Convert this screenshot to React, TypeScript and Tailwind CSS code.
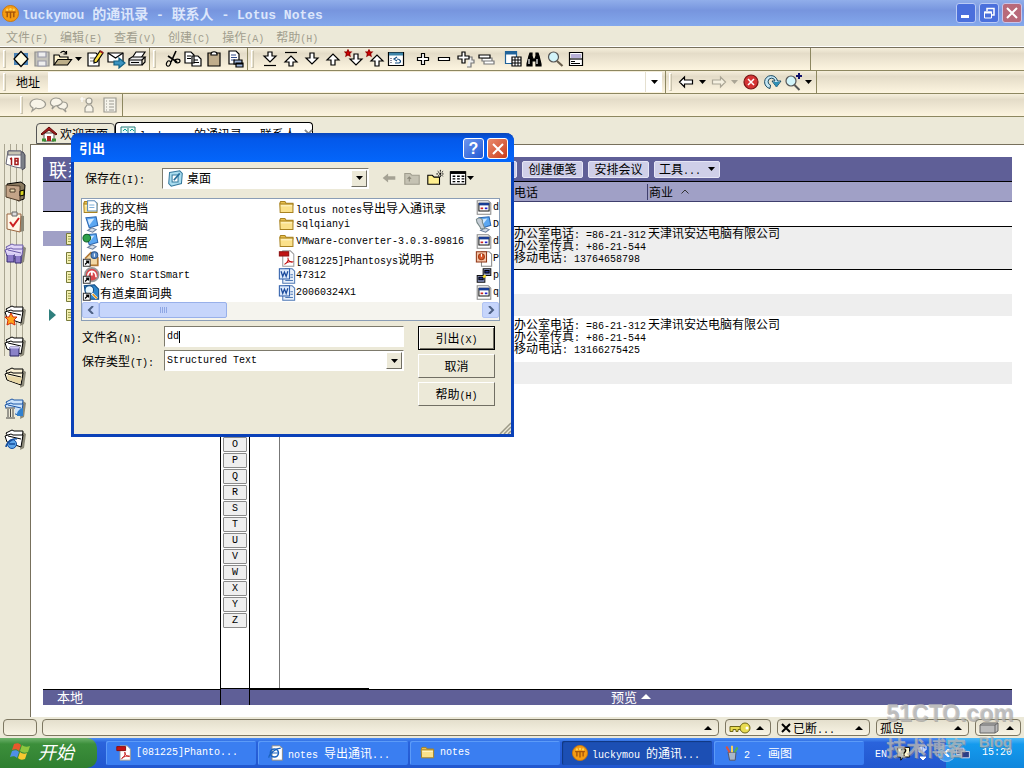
import { Fragment, type ReactNode } from "react";

// CJK glyphs are set at 12px, latin runs at 10px so two latin letters take one CJK cell
function Mix({ children, latin = "text-[10px]" }: { children: string; latin?: string }) {
    const parts = children.split(/([\x20-\x7e]+)/);
    if (parts.join("") === parts[1]) {
        return <span className={`font-[Liberation_Mono] whitespace-pre ${latin}`}>{children}</span>;
    }
    return (
        <span className="whitespace-pre">
            {parts.map((part, i) =>
                i % 2 ? <span key={i} className={`font-[Liberation_Mono] leading-0 ${latin}`}>{part}</span> : <Fragment key={i}>{part}</Fragment>
            )}
        </span>
    );
}

function Ico({ children, className = "size-5" }: { children: ReactNode; className?: string }) {
    return (
        <svg viewBox="0 0 20 20" className={`shrink-0 ${className}`} fill="none" stroke="#000" strokeWidth="1.2" aria-hidden="true">
            {children}
        </svg>
    );
}

const Caret = ({ className = "fill-black" }: { className?: string }) => (
    <svg viewBox="0 0 7 4" className={`h-1 w-[7px] shrink-0 ${className}`} aria-hidden="true"><path d="M0 0h7L3.5 4z" /></svg>
);

const CaretUp = ({ className = "h-1 w-2 fill-black" }: { className?: string }) => (
    <svg viewBox="0 0 8 4" className={`shrink-0 ${className}`} aria-hidden="true"><path d="M0 4h8L4 0z" /></svg>
);

const downArrow = "M8 4h4v5h4l-6 6-6-6h4z";
const upArrow = "M8 16h4v-5h4l-6-6-6 6h4z";
const star = "M4 1l1 2 2 0-1.500 1.500.5 2.500-2-1.300L2 7l.5-2.500L1 3h2z";

const icons = {
    diamond: <Ico><path d="M3 4h14v12H3z" fill="#4b83b5" stroke="none" /><path d="M10 2.500l7 7.500-7 7.500L3 10z" fill="#fffbe0" /></Ico>,
    save: <Ico><path d="M3 3h14v14H3z" fill="#c5c3bb" stroke="#8f8f8c" /><path d="M6 3h8v5H6zM6 12h8v5H6z" fill="#eee" stroke="#99a" /></Ico>,
    open: <Ico className="h-5 w-[21px]"><path d="M1.500 16V6h5l1 2h8v3" fill="#fff4cf" /><path d="M1.500 16l4-5.500H19L15 16z" fill="#bcae89" /><path d="M8 4c2-2.500 5-2 6 1m0-3v3h-3" /></Ico>,
    edit: <Ico><path d="M3 4h8l3 3v10H3z" fill="#fff" /><path d="M5 9h5M5 12h4" stroke="#777" /><path d="M9 11l6-9 3 2-6 9-3 1z" fill="#ffe23f" /><path d="M15 2l3 2" stroke="#a52020" strokeWidth="2" /></Ico>,
    mail: <Ico><path d="M2 4h15v9H2z" fill="#fff" /><path d="M2 4l7.500 5L17 4" /><path d="M8 12h5V9l6 5-6 5v-3H8z" fill="#3b93c0" stroke="#126083" /></Ico>,
    print: <Ico><path d="M5 9l4-6h9l-4 6z" fill="#fff" /><path d="M2 10l3-2h13l-3 3v5H2z" fill="#eee" /><path d="M2 11h13M15 16l3-3V8M4 13.500h8" /></Ico>,
    cut: <Ico><path d="M14 2l-5 11M6 7l9 6" strokeWidth="1.600" /><ellipse cx="6.500" cy="14.500" rx="2" ry="2.800" transform="rotate(25 6.500 14.500)" /><ellipse cx="15.500" cy="12" rx="2.500" ry="1.800" /></Ico>,
    copy: <Ico><path d="M2 3h6l3 3v8H2zM9 7h6l3 3v7H9z" fill="#fff" /><path d="M4 7h4M4 9.500h4M11 11h4M11 13.500h5" /></Ico>,
    clipboard: <Ico><path d="M4 4h12v13H4z" fill="#c0ad8c" /><path d="M7 5c0-3 6-3 6 0v1H7z" fill="#fff" /></Ico>,
    paste: <Ico><path d="M4 2h7l3 3v10H4z" fill="#fff" /><path d="M6 6h5M6 8.500h6M6 11h4" stroke="#334b88" /><path d="M9 11h8v4H9zM11 14h7v4h-7z" fill="#9cb3d8" /></Ico>,
    toBottom: <Ico><path d="M8 3h4v4h4l-6 6-6-6h4z" fill="#fff" /><path d="M4 16.500h12" /></Ico>,
    toTop: <Ico><path d="M8 17h4v-4h4l-6-6-6 6h4z" fill="#fff" /><path d="M4 3.500h12" /></Ico>,
    down: <Ico><path d={downArrow} fill="#fff" /></Ico>,
    up: <Ico><path d={upArrow} fill="#fff" /></Ico>,
    starDown: <Ico><path d={downArrow} fill="#fff" transform="translate(2 1)" /><path d={star} fill="#d00" stroke="#900" /></Ico>,
    starUp: <Ico><path d={upArrow} fill="#fff" transform="translate(2 1)" /><path d={star} fill="#d00" stroke="#900" /></Ico>,
    refreshWin: <Ico><path d="M2.500 3.500h15v13h-15z" fill="#fff" /><path d="M3 5h14" stroke="#3d84a8" strokeWidth="3" /><path d="M5 9v6" stroke="#446" strokeDasharray="1 1" /><path d="M9 14h4c3-1 1-4-2-4m0-2-3 2 3 2" stroke="#144d82" /></Ico>,
    plus: <Ico><path d="M8.500 4.500h3v4h4v3h-4v4h-3v-4h-4v-3h4z" fill="#fff" /></Ico>,
    minus: <Ico><path d="M4.500 8.500h11v3h-11z" fill="#fff" /></Ico>,
    plusAll: <Ico><path d="M14 8h3v3h2v3h-3v4h-4" stroke="#777" fill="#eee" /><path d="M7 3h3v4h4v3h-4v4H7v-4H3V7h4z" fill="#fff" /></Ico>,
    minusAll: <Ico><path d="M8 12h10v3H8zM6 9h10v3H6z" fill="#fff" stroke="#777" /><path d="M3 6h11v3H3z" fill="#fff" /></Ico>,
    calendarWin: <Ico><path d="M2.500 2.500h11v12h-11z" fill="#fff" stroke="#20639a" /><path d="M2 4h12" stroke="#20639a" strokeWidth="3" /><path d="M9 8h9v9H9z" fill="#fff" /><path d="M9 11h9M9 14h9M12 8v9M15 8v9" strokeWidth="1" /></Ico>,
    find: <Ico><path d="M3 15l2-8 1-3h2v3l1 3h2l1-3V4h2l1 3 2 8v2h-5v-5H8v5H3z" fill="#000" /><path d="M5 10v5M13 10v5" stroke="#fff" /></Ico>,
    zoom: <Ico><circle cx="8.500" cy="8" r="5" fill="#d2f4fa" stroke="#555" /><path d="M12 12l5.500 5" stroke="#6b604e" strokeWidth="2.200" /></Ico>,
    form: <Ico><path d="M3.500 3.500h13v13h-13z" fill="#fff" /><path d="M3.500 10h13" /><path d="M5 6h10M5 8h10" stroke="#7766b0" /><path d="M5 12.500h4M5 14.500h9" /></Ico>,
};

const Grip = () => <span className="ml-[3px] h-[18px] w-[3px] shrink-0 border border-[#c9c3ae] border-t-white border-l-white bg-[#ece5d0]" />;

function ToolButton({ label, children, className = "w-[21px]" }: { label: string; children: ReactNode; className?: string }) {
    return <button aria-label={label} className={`flex h-5 shrink-0 items-center justify-center ${className}`}>{children}</button>;
}

const barStyle = "flex h-[23px] items-stretch border-b border-[#8d8760] bg-linear-to-b from-[#f6efdc] via-[#e4dcc8] via-25% to-[#fdf5e0]";
const groupStyle = "flex items-center border-r border-[#8d8760]";

const fileTools = [
    ["新建", icons.diamond], ["保存", icons.save], ["打开", icons.open], ["▾", null], ["编辑文档", icons.edit], ["发送", icons.mail], ["打印", icons.print],
] as const;
const editTools = [["剪切", icons.cut], ["复制", icons.copy], ["粘贴", icons.clipboard], ["选择性粘贴", icons.paste]] as const;
const navTools = [
    ["末尾", icons.toBottom], ["开头", icons.toTop], ["下一个", icons.down], ["上一个", icons.up],
    ["下一未读", icons.starDown], ["上一未读", icons.starUp], ["刷新", icons.refreshWin],
] as const;
const treeTools = [["展开", icons.plus], ["折叠", icons.minus], ["全部展开", icons.plusAll], ["全部折叠", icons.minusAll]] as const;
const viewTools = [["视图", icons.calendarWin], ["查找", icons.find], ["放大", icons.zoom], ["属性", icons.form]] as const;

const NotesLogo = ({ className = "size-4" }: { className?: string }) => (
    <svg viewBox="0 0 18 18" className={`shrink-0 ${className}`} aria-hidden="true">
        <circle cx="9" cy="9" r="8.500" fill="#f59c13" stroke="#c9760c" />
        <g stroke="#a4540a" strokeWidth="1.500"><path d="M5.500 8v5M9 8v6M12.500 8v5M3.500 7.500h11" /></g>
        <g fill="#ffd352"><circle cx="5.500" cy="5" r="1.300" /><circle cx="9" cy="4.500" r="1.300" /><circle cx="12.500" cy="5" r="1.300" /></g>
    </svg>
);

function TitleBar() {
    return (
        <header className="flex h-[26px] shrink-0 items-center bg-linear-to-b from-[#91aeea] via-[#7795de] via-40% to-[#83a8ec] pr-[2px] pl-[2px]">
            <NotesLogo className="size-[17px]" />
            <h1 className="ml-[3px] flex-1 text-sm leading-5 font-bold text-[#dce6fb]">
                <Mix latin="text-[13px]">luckymou 的通讯录 - 联系人 - Lotus Notes</Mix>
            </h1>
            <div className="flex gap-[3px]">
                <button aria-label="最小化" className="flex size-5 items-end rounded-[3px] border border-[#b9caf5] bg-[#4a6fdc] p-1"><span className="h-[3px] w-2 bg-white" /></button>
                <button aria-label="还原" className="flex size-5 items-center justify-center rounded-[3px] border border-[#b9caf5] bg-[#4a6fdc]">
                    <svg viewBox="0 0 14 14" className="size-3.5" fill="none" stroke="#fff" aria-hidden="true"><path d="M5 5V2.500h7V9H9.500" strokeWidth="1.500" /><path d="M2.500 6h7v6h-7z" /><path d="M2 6.500h8" strokeWidth="2" /></svg>
                </button>
                <button aria-label="关闭" className="flex size-5 items-center justify-center rounded-[3px] border border-[#c9c3e8] bg-[#b8697a]">
                    <svg viewBox="0 0 14 14" className="size-3.5" stroke="#fff" strokeWidth="2" aria-hidden="true"><path d="M2 2l10 10M12 2L2 12" /></svg>
                </button>
            </div>
        </header>
    );
}

function Toolbars() {
    const group = (items: readonly (readonly [string, ReactNode])[]) =>
        items.map(([label, icon]) => (
            <ToolButton key={label} label={label} className={icon ? "w-[21px]" : "w-[11px]"}>{icon ?? <Caret />}</ToolButton>
        ));
    return (
        <div className="shrink-0">
            <div className={barStyle}>
                <div className={`${groupStyle} w-[150px]`}><Grip /><span className="w-1" />{group(fileTools)}</div>
                <div className={`${groupStyle} w-[98px]`}><Grip /><span className="w-[5px]" />{group(editTools)}</div>
                <div className={`${groupStyle} w-[563px]`}>
                    <Grip /><span className="w-[5px]" />{group(navTools)}<span className="w-1.5" />{group(treeTools)}<span className="w-1.5" />{group(viewTools)}
                </div>
            </div>
            <div className={barStyle}>
                <div className={`${groupStyle} w-[666px]`}>
                    <Grip />
                    <label htmlFor="address" className="w-[42px] pl-[10px] text-xs">地址</label>
                    <input id="address" className="h-5 min-w-0 flex-1 bg-white px-1 font-[Liberation_Mono] text-[10px] outline-none" />
                    <button aria-label="地址列表" className="mr-[3px] flex h-5 w-[17px] items-center justify-center border-l border-[#e5e0d0] bg-white"><Caret /></button>
                </div>
                <div className={`${groupStyle} w-[151px]`}>
                    <Grip />
                    <ToolButton label="后退" className="ml-[3px] w-[21px]"><Ico><path d="M3.500 10l5-5v3h8v4h-8v3z" fill="#fff" /></Ico></ToolButton>
                    <ToolButton label="后退历史" className="w-3"><Caret /></ToolButton>
                    <ToolButton label="前进"><Ico><path d="M16.500 10l-5-5v3h-8v4h8v3z" fill="#f5f0e0" stroke="#aaa595" /></Ico></ToolButton>
                    <ToolButton label="前进历史" className="w-[11px]"><Caret className="fill-[#aaa595]" /></ToolButton>
                    <ToolButton label="停止"><Ico><circle cx="10" cy="10" r="7" fill="#d43434" stroke="#7a1515" /><path d="M7 7l6 6M13 7l-6 6" stroke="#fff" strokeWidth="1.500" /></Ico></ToolButton>
                    <ToolButton label="刷新页面"><Ico><path d="M8 16.500A6.500 6.500 0 1 1 15.500 9H19l-4.500 6L10 9h3a3.500 3.500 0 1 0-4.500 4z" fill="#c4e6f4" stroke="#1b4a62" strokeWidth="1" /><path d="M11 10l3.500 5L18 10z" fill="#2f8fb5" stroke="none" /></Ico></ToolButton>
                    <ToolButton label="搜索"><Ico><circle cx="8" cy="9" r="5" fill="#d2f4fa" stroke="#555" /><path d="M11.500 13l5 5" stroke="#555" strokeWidth="2" /><path d="M13 4h6M16 1v6" stroke="#11116b" strokeWidth="2" /></Ico></ToolButton>
                    <ToolButton label="搜索选项" className="w-[11px]"><Caret /></ToolButton>
                </div>
            </div>
            <div className={barStyle}>
                <div className={`${groupStyle} w-[123px] pl-[17px]`}>
                    <Grip />
                    <ToolButton label="聊天" className="ml-1 w-[21px]"><Ico><path d="M4 16l1-3C-1 10 3 4 9 4s10 4 8 7c-2 3-7 3-9 2z" fill="#f8f4e8" stroke="#9c9a90" /></Ico></ToolButton>
                    <ToolButton label="群聊"><Ico><path d="M17 17l-1-3c4-2 3-7-2-7s-7 3-5 5c1 2 3 2 5 2z" fill="#f8f4e8" stroke="#9c9a90" /><path d="M3 14l1-3C-1 9 2 3 7 3s8 4 5 6c-2 2-4 2-6 2z" fill="#f8f4e8" stroke="#9c9a90" /></Ico></ToolButton>
                    <ToolButton label="联系人状态" className="ml-[9px] w-[21px]"><Ico><circle cx="10" cy="6" r="3" fill="#f8f4e8" stroke="#9c9a90" /><path d="M6 17v-4l2-3h4l2 3v4z" fill="#f8f4e8" stroke="#9c9a90" /><path d="M3 2v5M1 4h5" stroke="#fff" /></Ico></ToolButton>
                    <ToolButton label="列表"><Ico><path d="M4 3h12v14H4z" fill="#f5f3ea" stroke="#9c9a90" /><path d="M6 6h1m2 0h5M6 9h1m2 0h5M6 12h1m2 0h5M6 15h1m2 0h5" stroke="#9c9a90" /></Ico></ToolButton>
                </div>
            </div>
        </div>
    );
}

const Stack = ({ fill = "#fff", edge = "#000" }: { fill?: string; edge?: string }) => (
    <g stroke={edge} fill={fill}>
        <path d="M20 5l3 2-2 14-4 2z" fill="#8b8878" stroke="none" />
        <path d="M3 6l6-3 2 1h9l-1 9-13-2z" />
        <path d="M2 9l6-2 2 1h10l-2 12-14-5z" />
        <path d="M5 9l13 3" />
    </g>
);

const bookmarks: [string, ReactNode][] = [
    ["日历", <><path d="M6 3l14 1 2 3v13l-3 2" fill="#7c8088" stroke="#445" /><path d="M5 3h13v17l-6-1-9-3z" fill="#fff" stroke="#667" /><path d="M5 3h13v4H5z" fill="#c9c5b4" stroke="#667" /><path d="M8.500 10v7M7 11l2-1M12 10.500h3v6h-3zM12 13h3" stroke="#a31919" strokeWidth="1.500" /></>],
    ["通讯录", <><path d="M4 5l14-2 4 3-1 14-6 2z" fill="#8a7a60" /><path d="M3 6l14 1v15L3 18z" fill="#c3a488" stroke="#4b3a28" /><path d="M7 10h5v3H7z" fill="#e8d7b0" stroke="#4b3a28" /><path d="M17 12l4-1v5l-4 1z" fill="#d8d323" /></>],
    ["待办事项", <><path d="M5 4l16 2v15l-4 1z" fill="#8b8878" stroke="none" /><path d="M4 4h14l-1 18-13-3z" fill="#fff6e6" stroke="#9a6540" /><path d="M9 2h5v4H9z" fill="#ddd" stroke="#666" /><path d="M7 12l3 4 6-8" stroke="#cc2020" strokeWidth="2" /></>],
    ["复制器", <><Stack fill="#e1d6f7" edge="#6b5ba8" /><path d="M4 13h7v8H4zM12 14h6v8h-6z" fill="#8e7cc9" stroke="#372c70" /><path d="M4 13h7M12 14h6" stroke="#d6ccf4" strokeWidth="2" /></>],
    ["收藏夹书签", <><Stack /><path d="M8 10l2 4h4l-3 3 1 5-4-2-4 2 1-5-3-3h4z" fill="#ffa41c" stroke="#d32c0c" /></>],
    ["数据库", <><Stack /><path d="M7 13h9v9H7z" fill="#8a82c8" stroke="#29245e" /><path d="M7 13.500h9" stroke="#cdc8f2" strokeWidth="2" /></>],
    ["更多书签", <><Stack fill="#fbf2d6" /><path d="M4 10l3 1 12 2-2 6-12-4z" fill="#e9d8a6" stroke="none" /></>],
    ["历史", <><Stack fill="#cbe2fb" edge="#1c56a5" /><path d="M3 12h9v10H3z" fill="#ece9d8" stroke="none" /><path d="M3 12h9M3 22h9M5 13v8M7.500 13v8M10 13v8" stroke="#444" /><path d="M14 20c-1-5 4-8 6-8v8z" fill="#3181cf" stroke="none" /></>],
    ["浏览器书签", <><Stack /><circle cx="9" cy="17" r="4.500" fill="#5fa6ea" stroke="#154d9c" /><path d="M6 17h6M3 20c0-4 7-9 11-8" stroke="#154d9c" strokeWidth="1.500" /></>],
];

function BookmarkBar() {
    return (
        <nav className="relative flex w-[30px] shrink-0 flex-col">
            <div className="absolute top-0 left-1 flex h-[212px] gap-[5px]" aria-hidden="true">
                {[0, 1, 2, 3].map((i) => <span key={i} className="w-[1px] bg-[#aaa692]" />)}
            </div>
            {bookmarks.map(([label, art], i) => (
                <button key={label} aria-label={label} className={`relative flex h-[31px] w-[30px] items-center justify-center ${i === 4 ? "mt-[31px]" : ""}`}>
                    <svg viewBox="0 0 24 24" className="size-6" fill="none" stroke="#000" aria-hidden="true">{art}</svg>
                </button>
            ))}
        </nav>
    );
}

function Tabs() {
    return (
        <div className="flex h-[27px] shrink-0 items-end pl-9 text-xs leading-4">
            <button className="flex h-[21px] w-[79px] items-center gap-[3px] rounded-t border border-[#555] bg-[#ece9d8] pl-1">
                <svg viewBox="0 0 16 16" className="size-4 shrink-0" aria-hidden="true"><path d="M3 7h10v8H3z" fill="#fff" stroke="#555" /><path d="M0 8l8-7 8 7-1 1-7-5-7 5z" fill="#a51c1c" stroke="#5c0a0a" /><path d="M6 10h4v5H6z" fill="#a22" /><path d="M1 14h4M11 14h4" stroke="#3a8e32" strokeWidth="3" /></svg>
                欢迎页面
            </button>
            <button className="flex h-[22px] w-[198px] items-center gap-1 rounded-t border border-b-0 border-black bg-white pl-1">
                <svg viewBox="0 0 16 16" className="size-4 shrink-0" aria-hidden="true"><path d="M1 1h14v13H1z" fill="#e8fbf8" stroke="#287c78" /><path d="M8 2v12" stroke="#287c78" /><path d="M3 5l2-2 2 2M3 8h3M10 5l2-2 2 2M10 8h3" stroke="#12a195" fill="none" /></svg>
                <Mix>luckymou 的通讯录 - 联系人</Mix>
                <svg viewBox="0 0 10 10" className="ml-1 size-[9px] shrink-0" stroke="#888" strokeWidth="2" aria-hidden="true"><path d="M1 1l8 8M9 1L1 9" /></svg>
            </button>
        </div>
    );
}

const contacts = [
    { phone: "=86-21-312", fax: "+86-21-544", mobile: "13764658798", company: "天津讯安达电脑有限公司" },
    { phone: "=86-21-312", fax: "+86-21-544", mobile: "13166275425", company: "天津讯安达电脑有限公司" },
];

function ContactRow({ data, cell }: { data: (typeof contacts)[number]; cell: string }) {
    return (
        <tr className="align-top leading-3">
            <td className={cell} />
            <td className={cell}>
                <div className="flex flex-col">
                    <Mix>{`办公室电话: ${data.phone}`}</Mix>
                    <Mix>{`办公室传真: ${data.fax}`}</Mix>
                    <Mix>{`移动电话: ${data.mobile}`}</Mix>
                </div>
            </td>
            <td className={`${cell} pl-[1px]`}>{data.company}</td>
        </tr>
    );
}

function ContactsTable() {
    return (
        <table className="w-full table-fixed border-separate border-spacing-0 text-left text-xs">
            <colgroup><col className="w-[264px]" /><col className="w-[133px]" /><col /></colgroup>
            <thead>
                <tr className="h-5 bg-[#a0a0c6] leading-4">
                    <td className="border-b border-[#3f3f6d]" />
                    <th className="border-b border-[#3f3f6d] font-normal">电话</th>
                    <th className="border-b border-[#3f3f6d] font-normal">
                        <span className="flex items-center gap-2 border-l border-[#3f3f6d] pl-[1px]">
                            商业
                            <svg viewBox="0 0 8 5" className="h-[5px] w-2" fill="none" stroke="#333" aria-hidden="true"><path d="M.5 4.500L4 1l3.500 3.500" /></svg>
                        </span>
                    </th>
                </tr>
            </thead>
            <tbody>
                <tr className="h-6"><td colSpan={3} /></tr>
                <ContactRow data={contacts[0]} cell="h-11 border-y border-black bg-[#eee]" />
                <tr className="h-6"><td colSpan={3} /></tr>
                <tr className="h-[22px] bg-[#eee]"><td colSpan={3} /></tr>
                <ContactRow data={contacts[1]} cell="h-[46px] pt-[2px]" />
                <tr className="h-[22px] bg-[#eee]"><td colSpan={3} /></tr>
            </tbody>
        </table>
    );
}

const action = "flex h-[17px] items-center rounded-[2px] border border-[#e6e6f6] bg-[#cfcfe8] text-xs leading-[14px] text-black";

function ContactsView() {
    return (
        <main className="flex min-w-0 flex-1 flex-col border-t border-l border-[#77705c] bg-white px-3 pt-3 pb-3">
            <div className="flex h-[25px] shrink-0 items-center border-b border-black bg-[#5f5f97] pl-1.5">
                <h2 className="w-[397px] text-lg leading-6 text-white">联系</h2>
                <div className="flex gap-[5px]">
                    <span className={`${action} w-[71px]`} />
                    <button className={`${action} w-[61px] justify-center`}>创建便笺</button>
                    <button className={`${action} w-[61px] justify-center`}>安排会议</button>
                    <button className={`${action} w-[66px] justify-between px-1`}><Mix>工具...</Mix><Caret /></button>
                </div>
            </div>
            <div className="flex min-h-0 flex-1">
                <div className="w-[177px] shrink-0">
                    <div className="h-[30px] border-b border-black bg-[#a0a0c6]" />
                    <ul className="pt-[17px]">
                        {[0, 1, 2, 3, 4].map((i) => (
                            <li key={i} className="flex h-[19px] items-center">
                                <div className={`flex h-[15px] flex-1 items-center ${i === 0 ? "bg-[#a0a0c6]" : ""}`}>
                                    <span className="w-[23px] pl-1.5">
                                        {i === 4 && <svg viewBox="0 0 7 12" className="h-3 w-[7px]" aria-hidden="true"><path d="M0 0l7 6-7 6z" fill="#2f7f7d" /></svg>}
                                    </span>
                                    <svg viewBox="0 0 12 12" className="size-3" aria-hidden="true"><path d="M.5.5h11v11H.5z" fill="#f4f0b0" stroke="#777a3a" /><path d="M2 3.500h8M2 6h8M2 8.500h8" stroke="#9a9c50" /></svg>
                                </div>
                            </li>
                        ))}
                    </ul>
                </div>
                <div className="flex w-[30px] shrink-0 flex-col border-x border-b border-black">
                    <div className="h-[30px] shrink-0 bg-[#a0a0c6]" />
                    {"ABCDEFGHIJKLMNOPQRSTUVWXYZ".split("").map((letter) => (
                        <button key={letter} className="mx-[2px] mt-[1px] flex h-[15px] shrink-0 items-center justify-center rounded-[1px] border border-[#8a8a8a] bg-[#efefef] font-[Liberation_Mono] text-[10px] leading-3">
                            {letter}
                        </button>
                    ))}
                </div>
                <div className="flex min-w-0 flex-1 flex-col">
                    <ContactsTable />
                    <div className="flex w-[119px] flex-1 border-b border-black"><span className="w-[30px] border-r border-[#777]" /></div>
                </div>
            </div>
            <div className="flex h-4 shrink-0 items-stretch bg-[#5f5f97] text-[13px] leading-[13px] text-white">
                <div className="w-[177px] border-t border-black pl-3.5">本地</div>
                <div className="w-[30px] border-x border-black" />
                <button className="flex flex-1 items-center justify-center gap-1 border-t border-black pb-[2px]">预览 <CaretUp className="h-[5px] w-2.5 fill-white" /></button>
            </div>
        </main>
    );
}

const Folder = () => <><path d="M1.500 5l1-2h5l1.500 2h8v2h-14z" fill="#e9c04e" stroke="#a88221" /><path d="M1.500 6h15.500v10h-15z" fill="#fbe18a" stroke="#a88221" /><path d="M3 8h13" stroke="#fff6cb" /></>;
const Shortcut = () => <><path d="M1 11h8v8H1z" fill="#fff" stroke="#333" /><path d="M3 17l4-4M4 13h3v3" stroke="#000" strokeWidth="1.500" /></>;
const Pdf = () => <><path d="M5 1h9l4 4v14H5z" fill="#fff" stroke="#999" /><path d="M1 2h11v5H1z" fill="#c21313" stroke="#8b0d0d" /><path d="M7 17c4-3 5-6 4-8 0 4 4 6 6 5-3-1-7 0-10 3z" stroke="#c21313" /></>;
const Word = () => <><path d="M8 2h8l3 3v14H5V9z" fill="#e7effa" stroke="#4f79b5" /><path d="M14 9h3M14 12h3M8 16h9" stroke="#4f79b5" /><path d="M1 2h12v12H1z" fill="#dce9fb" stroke="#2a5ba8" /><path d="M3 5l2 6 2-5 2 5 2-6" stroke="#1c4b9c" strokeWidth="1.500" /></>;
const Config = () => <><path d="M2 2h13l3 3v13H2z" fill="#fff" stroke="#888" /><path d="M4 5h12v9H4z" fill="#fff" stroke="#111" /><path d="M4 6h12" stroke="#173c94" strokeWidth="3" /><path d="M6 11h3" stroke="#c22" strokeWidth="2" /><path d="M11 11h3" stroke="#22c" strokeWidth="2" /></>;
const Screen = () => <><path d="M4 2l12-1 2 10-10 3z" fill="#5ba7f2" stroke="#2b66b0" /><path d="M6 4l8-1-6 8z" fill="#cfe8ff" stroke="none" /><path d="M6 17l5-3 5 2-4 3z" fill="#d5dde8" stroke="#6a7f9c" /></>;

const files: [string, ReactNode][][] = [
    [
        ["我的文档", <><Folder /><path d="M6 2h8l3 3v9H6z" fill="#fff" stroke="#5a8ab8" /><path d="M8 7h6M8 10h6" stroke="#7fb0d8" /></>],
        ["我的电脑", <Screen />],
        ["网上邻居", <><Screen /><circle cx="5" cy="6" r="4.500" fill="#2da24b" stroke="#15632a" /></>],
        ["Nero Home", <><path d="M3 10l7-7 8 6v9H6" fill="#f3d9a5" stroke="#b27a35" strokeWidth="2" /><circle cx="14" cy="6" r="4" fill="#5688c4" stroke="#2c558a" /><path d="M14 4v4" stroke="#fff" /><Shortcut /></>],
        ["Nero StartSmart", <><circle cx="11" cy="9" r="8" fill="#d9494d" stroke="#999" strokeWidth="2" /><path d="M6 12c0-9 10-9 10 0M11 10V5" stroke="#fff" strokeWidth="2" /><Shortcut /></>],
        ["有道桌面词典", <><path d="M2 2l12-1 5 5v12H5z" fill="#2f86cc" stroke="#124a82" /><circle cx="8" cy="7" r="5" fill="#e6f7ff" stroke="#124a82" /><path d="M11 11l6 6" stroke="#fff" strokeWidth="3" /><path d="M12 12l5 5" stroke="#e89b22" strokeWidth="2" /><Shortcut /></>],
    ],
    [
        ["lotus notes导出导入通讯录", <Folder />],
        ["sqlqianyi", <Folder />],
        ["VMware-converter-3.0.3-89816", <Folder />],
        ["[081225]Phantosys说明书", <Pdf />],
        ["47312", <Word />],
        ["20060324X1", <Word />],
    ],
    [
        ["d", <Config />],
        ["D", <><Screen /><path d="M1 4c4-4 8 0 7 3l3 8H6c0-4-5-5-5-11z" fill="#c5cdd6" stroke="#788" /></>],
        ["d", <Config />],
        ["P", <><path d="M7 2h9l3 3v14H7z" fill="#fff" stroke="#888" /><path d="M1 2h12v12H1z" fill="#f3c3a6" stroke="#8e3312" /><circle cx="7" cy="8" r="3.500" fill="#d9572a" stroke="#a33c14" /><path d="M7 8V4.500" stroke="#fff" /></>],
        ["p", <><path d="M9 2h9v8H9zM2 10h9v8H2z" fill="#8d99c9" stroke="#111" /><path d="M4 12h5v3H4zM11 4h5v3h-5z" fill="#23338f" /><path d="M12 10l-3 2" stroke="#fbe12b" strokeWidth="3" /></>],
        ["q", <Config />],
    ],
];

const sunken = "border border-t-[#7d7a6c] border-l-[#7d7a6c] border-r-white border-b-white";
const raised = "border border-t-white border-l-white border-r-[#716f64] border-b-[#716f64] bg-[#ece9d8]";

function Combo({ id, value, label, icon, className }: { id: string; value: string; label: string; icon?: ReactNode; className: string }) {
    return (
        <div className={`relative bg-white ${sunken} ${className}`}>
            <select id={id} aria-label={label} className={`block size-full appearance-none bg-transparent leading-4 outline-none ${icon ? "pl-6 text-xs" : "pl-[2px] font-[Liberation_Mono] text-[10px]"}`}>
                <option>{value}</option>
            </select>
            {icon && <span className="pointer-events-none absolute top-[1px] left-1">{icon}</span>}
            <span className={`pointer-events-none absolute top-[1px] right-[1px] bottom-[1px] flex w-4 items-center justify-center ${raised}`}><Caret /></span>
        </div>
    );
}

const ScrollArrow = ({ d, label }: { d: string; label: string }) => (
    <button aria-label={label} className="flex h-4 w-[17px] items-center justify-center rounded-[2px] border border-[#b2c4f3] bg-[#c6d5fb]">
        <svg viewBox="0 0 8 8" className="size-2" fill="none" stroke="#4d6185" strokeWidth="2" aria-hidden="true"><path d={d} /></svg>
    </button>
);

function ExportDialog() {
    return (
        <div role="dialog" aria-labelledby="dlg-title" className="absolute top-[133px] left-[71px] flex h-[304px] w-[443px] flex-col rounded-t-lg border-[3px] border-t-0 border-[#0a41b8] bg-[#ece9d8]">
            <div className="-mx-[3px] flex h-[29px] shrink-0 items-center gap-[3px] rounded-t-lg bg-linear-to-b from-[#0845b9] via-[#0358ea] via-20% to-[#0466fb] pr-1.5 pl-2">
                <h2 id="dlg-title" className="flex-1 text-[13px] leading-5 font-bold text-white">引出</h2>
                <button aria-label="帮助" className="mt-[2px] size-[21px] rounded-[3px] border border-white bg-linear-to-br from-[#6d96ee] to-[#2257d3] font-[Liberation_Sans] text-base leading-[18px] font-bold text-white">?</button>
                <button aria-label="关闭" className="mt-[2px] flex size-[21px] items-center justify-center rounded-[3px] border border-white bg-linear-to-br from-[#e88a6c] to-[#cc3a16]">
                    <svg viewBox="0 0 14 14" className="size-3.5" stroke="#fff" strokeWidth="2" aria-hidden="true"><path d="M2 2l10 10M12 2L2 12" /></svg>
                </button>
            </div>
            <div className="flex h-9 shrink-0 items-center pb-1 pl-[11px] text-xs">
                <label htmlFor="look-in" className="w-[77px]"><Mix>保存在(I):</Mix></label>
                <Combo
                    id="look-in"
                    label="保存在"
                    value="桌面"
                    className="h-[21px] w-[207px]"
                    icon={<Ico className="size-[17px]"><path d="M3 3l12-2 3 3-1 12-12 3-3-3z" fill="#a9dcef" stroke="#34789c" /><path d="M6 6h7v8H6z" fill="#fff" stroke="#34789c" /><path d="M8 12l7-8" stroke="#276e9a" strokeWidth="2" /></Ico>}
                />
                <div className="flex pl-2">
                    <ToolButton label="返回" className="w-[23px]"><Ico className="size-[18px]"><path d="M3 10l6-5v3h8v4H9v3z" fill="#a5a294" stroke="none" /></Ico></ToolButton>
                    <ToolButton label="上一级" className="w-[23px]"><Ico className="size-[18px]"><path d="M2 5h6l2 2h8v10H2z" fill="#c5c2b3" stroke="#a09d8e" /><path d="M7 14V9m-2 2l2-2 2 2" stroke="#8b887a" /></Ico></ToolButton>
                    <ToolButton label="新建文件夹" className="w-[23px]"><Ico className="size-[18px]"><path d="M2 7h5l2 2h6v8H2z" fill="#ffef8f" /><path d="M16 1v9M11.500 5.500h9M13 2.500l6 6M19 2.500l-6 6" strokeWidth="1" strokeDasharray="2 1" /></Ico></ToolButton>
                    <ToolButton label="查看方式" className="w-[30px]"><Ico className="size-[18px]"><path d="M1.500 3h17v14h-17z" fill="#fff" /><path d="M1.500 4h17" strokeWidth="3" /><path d="M4 8h3m2 0h3m2 0h3M4 11h3m2 0h3m2 0h3M4 14h3m2 0h3m2 0h3" strokeWidth="1.500" /></Ico><Caret /></ToolButton>
                </div>
            </div>
            <div className="mx-[7px] mr-[11px] flex h-[123px] shrink-0 flex-col border border-[#8a9db5] bg-white">
                <div className="grid flex-1 grid-cols-[196px_197px_24px] text-xs">
                    {files.map((column, c) => (
                        <ul key={c} className="min-w-0">
                            {column.map(([name, art], i) => (
                                <li key={i} className="flex h-[17px] items-center leading-4"><Ico className="h-[17px] w-[18px]">{art}</Ico><Mix>{name}</Mix></li>
                            ))}
                        </ul>
                    ))}
                </div>
                <div className="flex h-[18px] shrink-0 items-start bg-[#f5f4ee]">
                    <ScrollArrow label="向左" d="M6 0L2 4l4 4" />
                    <div className="flex h-4 w-[128px] items-center justify-center gap-[1px] rounded-[2px] border border-[#98b0ea] bg-[#c6d5fb]">
                        {[0, 1, 2, 3].map((i) => <span key={i} className="h-1.5 w-[1px] bg-[#8fa7e4]" />)}
                    </div>
                    <span className="flex-1" />
                    <ScrollArrow label="向右" d="M2 0l4 4-4 4" />
                </div>
            </div>
            <div className="flex pt-[5px] pl-2 text-xs">
                <div className="flex w-[336px] flex-col gap-[3px]">
                    <div className="flex h-[21px] items-center">
                        <label htmlFor="file-name" className="w-[82px]"><Mix>文件名(N):</Mix></label>
                        <div className={`flex h-[21px] w-60 items-center bg-white pl-[2px] ${sunken}`}>
                            <input id="file-name" defaultValue="dd" className="w-3 bg-transparent font-[Liberation_Mono] text-[10px] outline-none" />
                            <span className="h-3 w-[1px] bg-black" />
                        </div>
                    </div>
                    <div className="flex h-[21px] items-center">
                        <label htmlFor="file-type" className="w-[82px]"><Mix>保存类型(T):</Mix></label>
                        <Combo id="file-type" label="保存类型" value="Structured Text" className="h-[21px] w-60" />
                    </div>
                </div>
                <div className="flex w-[77px] flex-col gap-1">
                    <button className="h-6 border border-black bg-[#ece9d8] shadow-[inset_1px_1px_0_#fff,inset_-1px_-1px_0_#716f64]"><Mix>引出(X)</Mix></button>
                    <button className={`h-6 ${raised}`}>取消</button>
                    <button className={`h-6 ${raised}`}><Mix>帮助(H)</Mix></button>
                </div>
            </div>
            <svg viewBox="0 0 12 12" className="mt-auto size-3 self-end" stroke="#9c9987" strokeWidth="1.500" aria-hidden="true"><path d="M1 12L12 1M5 12l7-7M9 12l3-3" /></svg>
        </div>
    );
}

const pill = "flex h-[17px] items-center rounded border border-[#7d7761] bg-linear-to-b from-[#e4dfcd] to-[#f8f4e4] pr-1.5 pl-[3px] text-xs leading-4";

function StatusBar() {
    return (
        <div className="flex h-[21px] shrink-0 items-center gap-1.5 pr-[3px] pl-[3px]">
            <div className={`${pill} w-[34px]`} />
            <button aria-label="消息" className={`${pill} -ml-[1px] flex-1 justify-end`}><CaretUp /></button>
            <button aria-label="安全" className={`${pill} w-[46px] justify-between`}>
                <svg viewBox="0 0 22 12" className="h-3 w-[22px]" aria-hidden="true"><path d="M1 4.500h12v3H9v2H7v-2H4v2H1z" fill="#e9dc51" stroke="#6f6717" /><circle cx="16" cy="6" r="5" fill="#e9dc51" stroke="#6f6717" /><circle cx="18" cy="6" r="1.500" fill="#fff" /></svg>
                <CaretUp />
            </button>
            <button className={`${pill} w-[93px] justify-between`}>
                <span className="flex items-center gap-[2px]">
                    <svg viewBox="0 0 10 10" className="size-[10px]" stroke="#000" strokeWidth="2" aria-hidden="true"><path d="M1 1l8 8M9 1L1 9" /></svg>
                    <Mix>已断...</Mix>
                </span>
                <CaretUp />
            </button>
            <button className={`${pill} w-[93px] justify-between`}>孤岛 <CaretUp /></button>
            <button aria-label="邮件" className={`${pill} w-[46px] justify-between`}>
                <svg viewBox="0 0 20 12" className="h-3 w-5" aria-hidden="true"><path d="M1 3l3-2h15v8l-3 2H1z" fill="#bbb" stroke="#666" /><path d="M1 3h15v8M16 3l3-2" fill="none" stroke="#666" /></svg>
                <CaretUp />
            </button>
        </div>
    );
}

const tasks: { label: string; icon: ReactNode; active?: boolean }[] = [
    { label: "[081225]Phanto...", icon: <Ico className="size-4"><Pdf /></Ico> },
    { label: "notes 导出通讯...", icon: <Ico className="size-4"><path d="M5 1h10l3 3v15H5z" fill="#fff" stroke="#888" /><circle cx="8" cy="10" r="5" stroke="#1a62bd" strokeWidth="2" /><path d="M4 10h8M1 16c0-5 9-12 15-12" stroke="#1a62bd" strokeWidth="1.500" /></Ico> },
    { label: "notes", icon: <Ico className="size-4"><Folder /></Ico> },
    { label: "luckymou 的通讯...", icon: <NotesLogo />, active: true },
    { label: "2 - 画图", icon: <Ico className="size-4"><path d="M5 9h10l-1 10H7z" fill="#a9b7c8" stroke="#556" /><path d="M7 9L3 2" stroke="#e0523b" strokeWidth="2.500" /><path d="M10 9V1" stroke="#f1cf5a" strokeWidth="2.500" /><path d="M13 9l4-6" stroke="#57b04d" strokeWidth="2.500" /></Ico> },
];

function Taskbar() {
    return (
        <footer className="flex h-[30px] shrink-0 items-stretch bg-linear-to-b from-[#4a8df3] via-[#2a63dc] via-15% to-[#2157cf] text-white">
            <button className="flex w-[97px] items-center gap-[6px] rounded-r-[10px] bg-linear-to-b from-[#6db36c] via-[#3c8f3b] via-20% to-[#2f7f30] pb-1 pl-2.5 text-lg leading-6 italic">
                <svg viewBox="0 0 22 20" className="h-5 w-[22px]" aria-hidden="true">
                    <path d="M4 3c3-1 5-1 7 1L9 10C7 8 5 8 2 9z" fill="#e8582c" /><path d="M12 4c2 2 5 2 8 1l-2 6c-3 1-5 1-8-1z" fill="#8fc73e" />
                    <path d="M2 10c3-1 5-1 7 1l-2 6c-2-2-4-2-7-1z" fill="#4f8fe8" /><path d="M10 11c2 2 5 2 7 1l-2 6c-3 1-5 1-7-1z" fill="#f8c930" />
                </svg>
                开始
            </button>
            <div className="flex min-w-0 flex-1 items-center gap-[2px] pl-[9px]">
                {tasks.map((t) => (
                    <button
                        key={t.label}
                        className={`flex h-6 w-[150px] items-center gap-1 rounded-[2px] pl-2.5 text-xs leading-4 ${t.active ? "bg-[#1c4fb4] shadow-[inset_1px_1px_1px_#113780]" : "bg-[#3a7ef1] shadow-[inset_1px_1px_0_#5c9bf8]"}`}
                    >
                        {t.icon}
                        <Mix>{t.label}</Mix>
                    </button>
                ))}
            </div>
            <div className="flex w-[149px] shrink-0 items-center text-xs">
                <span className="w-[21px]"><Mix>EN</Mix></span>
                <Ico className="size-4"><path d="M2 3h15v12H9l-3 4v-4H2z" fill="#fffbd2" /><path d="M7 7c0-3 5-3 5 0 0 2-2 2-2 4m0 1v2" strokeWidth="2" /></Ico>
                <svg viewBox="0 0 10 16" className="ml-1.5 h-4 w-2.5" fill="none" stroke="#fff" aria-hidden="true"><path d="M3 1h5v4H3z" /><path d="M1 3h5v4H1z" /><path d="M2 12h6l-3 3z" fill="#fff" /></svg>
                <div className="ml-[18px] flex flex-1 items-center self-stretch bg-linear-to-b from-[#4cb9f7] via-[#149bee] via-20% to-[#1086dc]">
                    <button aria-label="显示隐藏的图标" className="-ml-2 flex size-[17px] items-center justify-center rounded-full bg-[#3d9bf0] shadow-[inset_0_0_2px_#fff]">
                        <svg viewBox="0 0 8 8" className="size-2" fill="none" stroke="#fff" strokeWidth="2" aria-hidden="true"><path d="M6 0L2 4l4 4" /></svg>
                    </button>
                    <Ico className="size-4"><path d="M2 4h9v8H2z" fill="#3b4f99" stroke="#dde" /><path d="M8 8h10v8H8z" fill="#2c3f85" stroke="#dde" /></Ico>
                    <span className="flex flex-1 justify-end pr-3"><Mix>15:20</Mix></span>
                </div>
            </div>
        </footer>
    );
}

export default function App() {
    return (
        <div className="relative flex h-screen flex-col overflow-hidden bg-[#ece9d8] font-['Noto_Sans_CJK_SC',sans-serif] text-black">
            <TitleBar />
            <nav className="flex h-[22px] shrink-0 items-center gap-3 border-b border-[#77705c] pl-1.5 text-xs leading-4 text-[#a19e8e] shadow-[inset_0_-1px_0_#fff]">
                {["文件(F)", "编辑(E)", "查看(V)", "创建(C)", "操作(A)", "帮助(H)"].map((m) => <button key={m}><Mix>{m}</Mix></button>)}
            </nav>
            <Toolbars />
            <Tabs />
            <div className="flex min-h-0 flex-1">
                <BookmarkBar />
                <ContactsView />
            </div>
            <StatusBar />
            <Taskbar />
            <ExportDialog />
            <div className="pointer-events-none absolute right-3 bottom-2 flex w-[126px] flex-col gap-2 font-bold text-[#bdbdbd]/70 [text-shadow:1px_1px_0_#8888]">
                <span className="font-[Liberation_Sans] text-[23px] leading-[30px]">51CTO.com</span>
                <span className="flex items-start justify-between text-xl leading-6">
                    技术博客
                    <span className="font-[Liberation_Sans] text-[15px] leading-3">Blog</span>
                </span>
            </div>
        </div>
    );
}
